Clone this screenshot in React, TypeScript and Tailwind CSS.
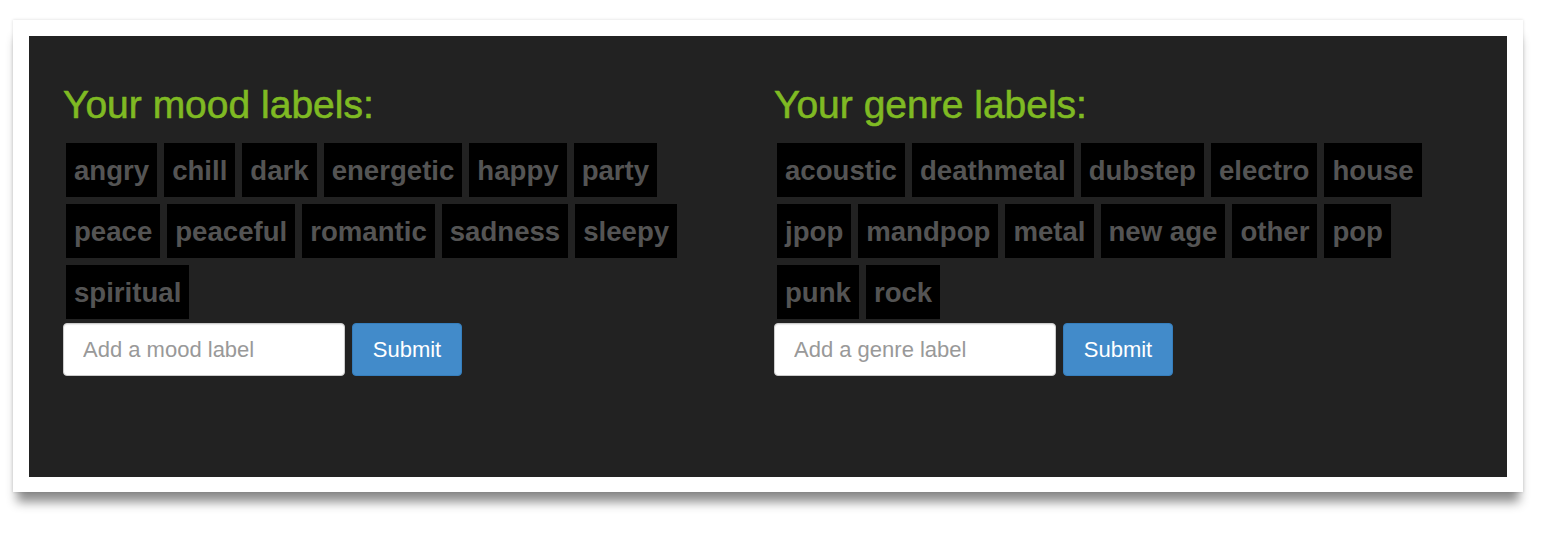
import React from 'react';

interface LabelSectionProps {
  title: string;
  labels: string[];
  placeholder: string;
}

const moodLabels = [
  'angry', 'chill', 'dark', 'energetic', 'happy', 'party',
  'peace', 'peaceful', 'romantic', 'sadness', 'sleepy', 'spiritual',
];

const genreLabels = [
  'acoustic', 'deathmetal', 'dubstep', 'electro', 'house',
  'jpop', 'mandpop', 'metal', 'new age', 'other', 'pop',
  'punk', 'rock',
];

const LabelSection: React.FC<LabelSectionProps> = ({ title, labels, placeholder }) => {
  return (
    <div>
      <h2 className="text-[39px] leading-[39px] font-normal text-[#7fba23] [-webkit-text-stroke:0.6px_#7fba23]">{title}</h2>

      {/* tag list */}
      <div className="mt-[19px] ml-[3px] w-[674px] flex flex-wrap gap-[7px]">
        {labels.map((label) => (
          <span
            key={label}
            className="h-[54px] pt-[1px] px-[8px] bg-black text-[#545454] text-[27.6px] leading-[53px] font-bold whitespace-nowrap"
          >
            {label}
          </span>
        ))}
      </div>

      {/* add form */}
      <form className="mt-[4px] flex gap-[7px]" onSubmit={(e) => e.preventDefault()}>
        <input
          type="text"
          placeholder={placeholder}
          className="w-[282px] h-[53px] px-[19px] bg-white border border-[#ccc] rounded-[4px] text-[22px] text-[#555] placeholder:text-[#999] shadow-[inset_0_1px_1px_rgba(0,0,0,0.08)] outline-none"
        />
        <button
          type="submit"
          className="w-[110px] h-[53px] bg-[#428bca] border border-[#357ebd] rounded-[4px] text-white text-[22px]"
        >
          Submit
        </button>
      </form>
    </div>
  );
};

const App: React.FC = () => {
  return (
    <div className="min-h-[536px] bg-white pt-[20px] pl-[13px] font-['Liberation_Sans',Arial,sans-serif]">
      <div className="w-[1510px] h-[472px] bg-white pt-[16px] px-[16px] shadow-[0_14px_10px_-4px_rgba(0,0,0,0.45),0_0_3px_rgba(0,0,0,0.15)]">
        <div className="w-[1478px] h-[441px] bg-[#222] pt-[49px] pl-[34px] grid grid-cols-[711px_711px] content-start">
          <LabelSection title="Your mood labels:" labels={moodLabels} placeholder="Add a mood label" />
          <LabelSection title="Your genre labels:" labels={genreLabels} placeholder="Add a genre label" />
        </div>
      </div>
    </div>
  );
};

export default App;
